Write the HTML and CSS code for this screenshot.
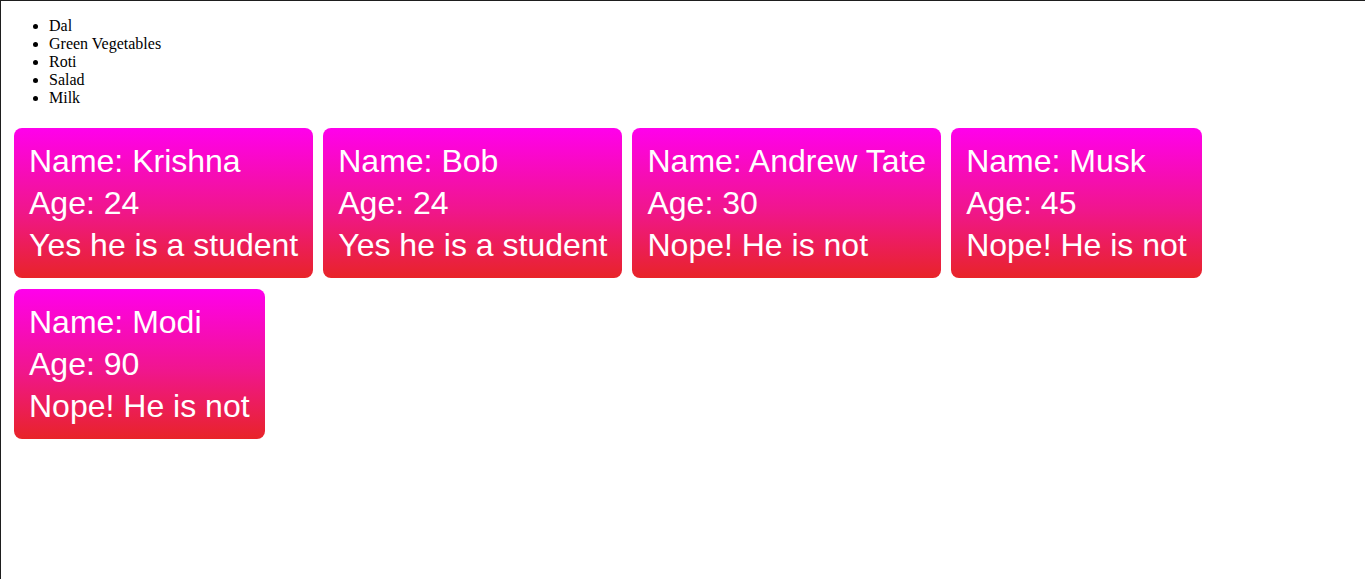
FILE: index.html
```
<!DOCTYPE html>
<html lang="en">
<head>
  <meta charset="UTF-8" />
  <title>People</title>
  <link rel="stylesheet" href="styles.css">
</head>
<body>

  <!-- Food list -->
  <ul class="food">
    <li>Dal</li>
    <li>Green Vegetables</li>
    <li>Roti</li>
    <li>Salad</li>
    <li>Milk</li>
  </ul>

  <!-- People cards -->
  <div class="cards">
    <div class="card">
      <div>Name: Krishna</div>
      <div>Age: 24</div>
      <div>Yes he is a student</div>
    </div>
    <div class="card">
      <div>Name: Bob</div>
      <div>Age: 24</div>
      <div>Yes he is a student</div>
    </div>
    <div class="card">
      <div>Name: Andrew Tate</div>
      <div>Age: 30</div>
      <div>Nope! He is not</div>
    </div>
    <div class="card">
      <div>Name: Musk</div>
      <div>Age: 45</div>
      <div>Nope! He is not</div>
    </div>
    <div class="card">
      <div>Name: Modi</div>
      <div>Age: 90</div>
      <div>Nope! He is not</div>
    </div>
  </div>

</body>
</html>
```

FILE: styles.css
```
html {
  background: white;
  box-shadow: inset 1px 1px 0 #1e1e1e;
  min-height: 100%;
}

body {
  margin: 0;
  padding: 17px 8px 8px;
  font-family: 'Liberation Serif', serif;
  font-size: 16px;
  line-height: 18px;
  color: black;
}

.food {
  margin: 0 0 15px;
  padding-left: 41px;
}

.cards {
  display: flex;
  flex-wrap: wrap;
  align-items: flex-start;
  gap: 11px 10px;
  padding: 6px;
}

.card {
  padding: 12px 15px;
  border-radius: 8px;
  background: linear-gradient(to bottom, #ff00ec, #f0168c 55%, #e82428);
  color: white;
  font-family: 'Liberation Sans', Arial, sans-serif;
  font-size: 32px;
  line-height: 42px;
}
```
